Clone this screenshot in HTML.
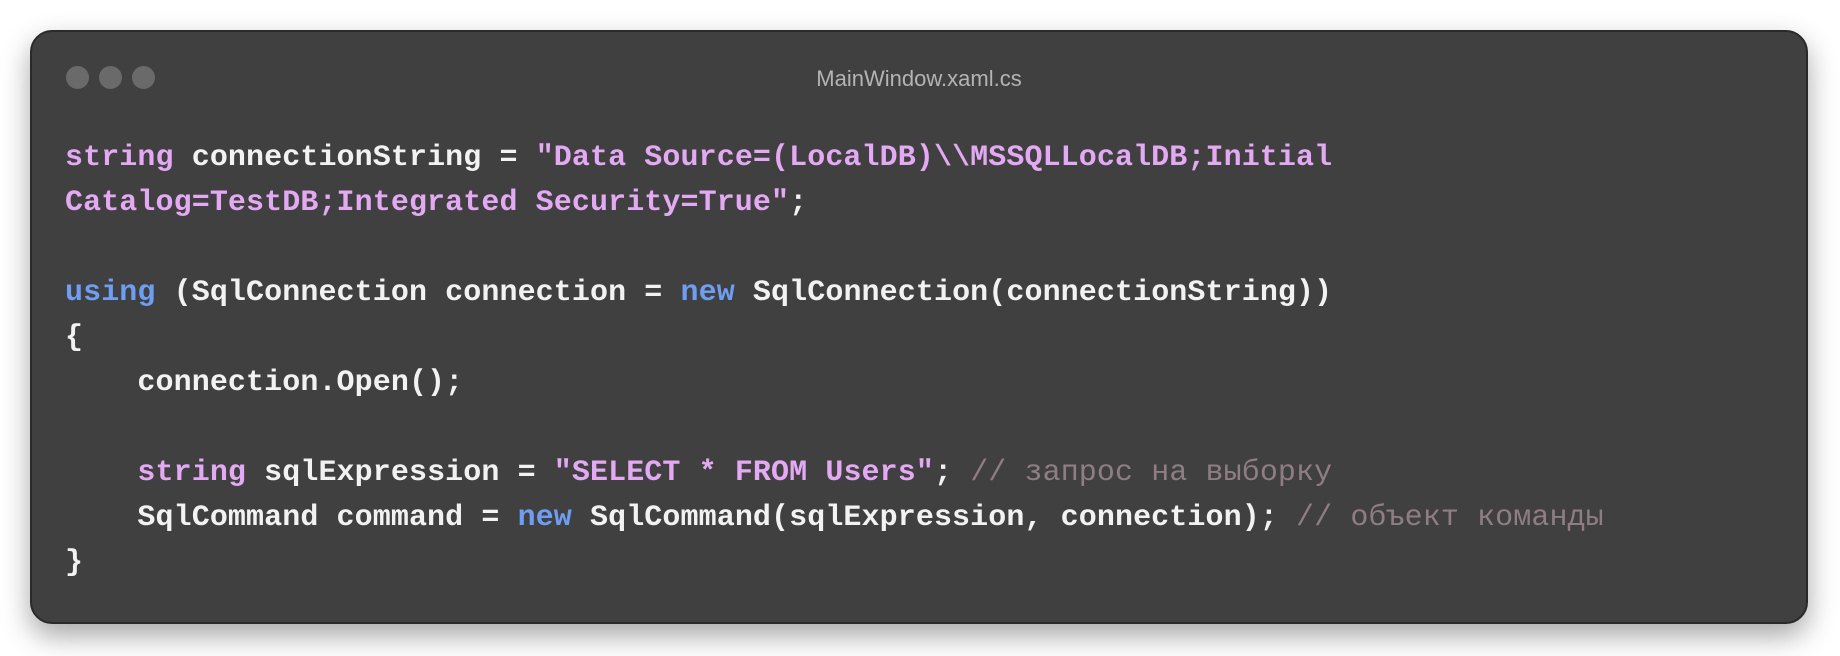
<!DOCTYPE html>
<html><head><meta charset="utf-8"><style>
html,body{margin:0;padding:0;width:1840px;height:656px;background:#fff;overflow:hidden}
.win{position:absolute;left:30px;top:30px;width:1778px;height:594px;background:#404040;border-radius:22px;border:2px solid #2a2a2a;box-shadow:0 12px 28px rgba(0,0,0,.35);box-sizing:border-box}
.dot{position:absolute;top:34px;width:23px;height:23px;border-radius:50%;background:#6a6a6a}
.title{position:absolute;top:34px;left:0;right:0;text-align:center;font:22px "Liberation Sans",sans-serif;color:#b4b4b4}
pre{position:absolute;left:33px;top:104px;margin:0;font:bold 30px/45px "Liberation Mono","DejaVu Sans Mono",monospace;color:#f2f2f2;letter-spacing:0.1px}
.s{color:#e3a9f2}.k{color:#6e9df2}.c{color:#8e7e84;font-weight:normal}
</style></head><body>
<div class="win">
<div class="dot" style="left:34px"></div><div class="dot" style="left:67px"></div><div class="dot" style="left:100px"></div>
<div class="title">MainWindow.xaml.cs</div>
<pre><span class="s">string</span> connectionString = <span class="s">"Data Source=(LocalDB)\\MSSQLLocalDB;Initial
Catalog=TestDB;Integrated Security=True"</span>;

<span class="k">using</span> (SqlConnection connection = <span class="k">new</span> SqlConnection(connectionString))
{
    connection.Open();

    <span class="s">string</span> sqlExpression = <span class="s">"SELECT * FROM Users"</span>; <span class="c">// запрос на выборку</span>
    SqlCommand command = <span class="k">new</span> SqlCommand(sqlExpression, connection); <span class="c">// объект команды</span>
}</pre>
</div>
</body></html>
